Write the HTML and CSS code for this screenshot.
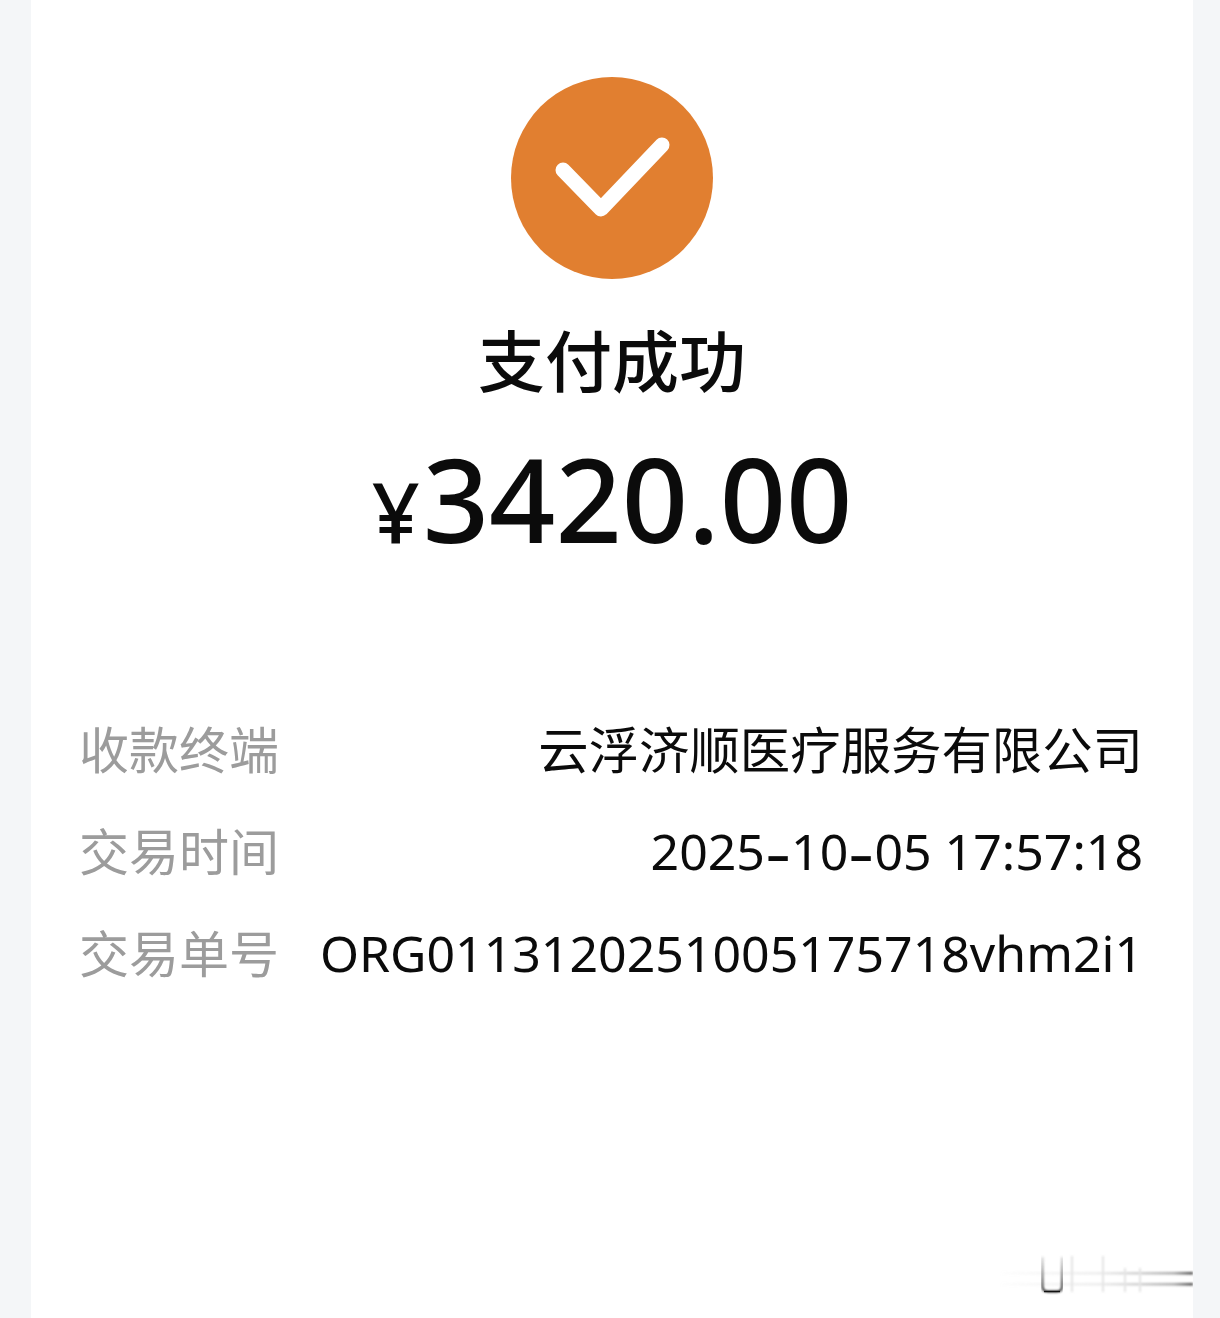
FILE: index.html
```html
<!DOCTYPE html>
<html lang="zh-CN">
<head>
<meta charset="utf-8">
<title>支付成功</title>
<link rel="stylesheet" href="styles.css">
</head>
<body>
<main class="panel">
  <svg class="check" viewBox="0 0 202 202" width="202" height="202" aria-hidden="true">
    <circle cx="101" cy="101" r="101" fill="#e17f30"/>
    <path d="M52 93 L90 132 L151 68" fill="none" stroke="#fff" stroke-width="15" stroke-linecap="round" stroke-linejoin="round"/>
  </svg>
  <h1 class="title">支付成功</h1>
  <p class="amount"><span class="currency">¥</span>3420.00</p>
  <dl class="details">
    <div class="row"><dt>收款终端</dt><dd class="value-cjk">云浮济顺医疗服务有限公司</dd></div>
    <div class="row"><dt>交易时间</dt><dd class="value-num">2025<span class="dash">-</span>10<span class="dash">-</span>05 17:57:18</dd></div>
    <div class="row"><dt>交易单号</dt><dd class="value-num">ORG0113120251005175718vhm2i1</dd></div>
  </dl>
  <svg class="mark" viewBox="0 0 193 50" width="193" height="50" aria-hidden="true">
    <defs>
      <filter id="soft" x="-5%" y="-20%" width="110%" height="140%"><feGaussianBlur stdDeviation="0.8"/></filter>
      <linearGradient id="fade" x1="0" x2="1" y1="0" y2="0">
        <stop offset="0" stop-color="#ccc" stop-opacity="0.02"/>
        <stop offset="0.5" stop-color="#ccc" stop-opacity="0.35"/>
        <stop offset="0.9" stop-color="#aaa"/>
        <stop offset="1" stop-color="#444"/>
      </linearGradient>
      <linearGradient id="drop" x1="0" x2="0" y1="0" y2="1">
        <stop offset="0" stop-color="#666" stop-opacity="0.25"/>
        <stop offset="0.7" stop-color="#555"/>
        <stop offset="1" stop-color="#222"/>
      </linearGradient>
    </defs>
    <g filter="url(#soft)">
      <rect x="0" y="22" width="193" height="2.5" fill="url(#fade)"/>
      <rect x="0" y="33" width="193" height="2.5" fill="url(#fade)"/>
      <path d="M72 6V42M103 6V42M125 18V42M140 18V42" stroke="#e4e4e4" stroke-width="2" fill="none"/>
    </g>
    <path d="M42.5 7V36Q42.5 41.5 48 41.5H57Q62 41.5 62 36V7" fill="none" stroke="url(#drop)" stroke-width="2" filter="url(#soft)"/>
    <path d="M44 41.5H60" fill="none" stroke="#111" stroke-width="1.4"/>
  </svg>
</main>
</body>
</html>
```
FILE: styles.css
```css
* { box-sizing: border-box; }
html, body { margin: 0; height: 100%; }
body {
  background: #f4f6f8;
  font-family: "Noto Sans", "Noto Sans CJK SC", sans-serif;
  color: #0b0b0b;
  overflow: hidden;
}
.panel {
  position: relative;
  display: flex;
  flex-direction: column;
  align-items: center;
  height: 1318px;
  margin: 0 27px 0 31px;
  padding: 77px 50px 0;
  background: #fff;
}
.check { display: block; flex: none; }
.title {
  margin: 41px 0 0;
  font: 500 67px/76px "Noto Sans CJK SC", sans-serif;
}
.amount {
  margin: 32px 0 0;
  font-size: 116px;
  font-weight: 500;
  line-height: 140px;
  white-space: nowrap;
}
.currency { font-size: 84px; font-weight: 500; margin-right: 3px; }
.details {
  align-self: stretch;
  margin: 130px 0 0;
  display: flex;
  flex-direction: column;
  gap: 30px;
}
.row {
  display: flex;
  justify-content: space-between;
  align-items: center;
  height: 72px;
  font-size: 50px;
  white-space: nowrap;
}
.row dt { margin-left: -2px; color: #9c9c9c; font-family: "Noto Sans CJK SC", sans-serif; }
.row dd { margin: 0; }
.value-cjk { font-size: 50.4px; font-family: "Noto Sans CJK SC", sans-serif; }
.row .value-num { margin-top: 4px; }
.dash { display: inline-block; margin: 0 5px; transform: scale(1.6, 1.25); }
.mark { position: absolute; right: 0; bottom: 18px; }
```
